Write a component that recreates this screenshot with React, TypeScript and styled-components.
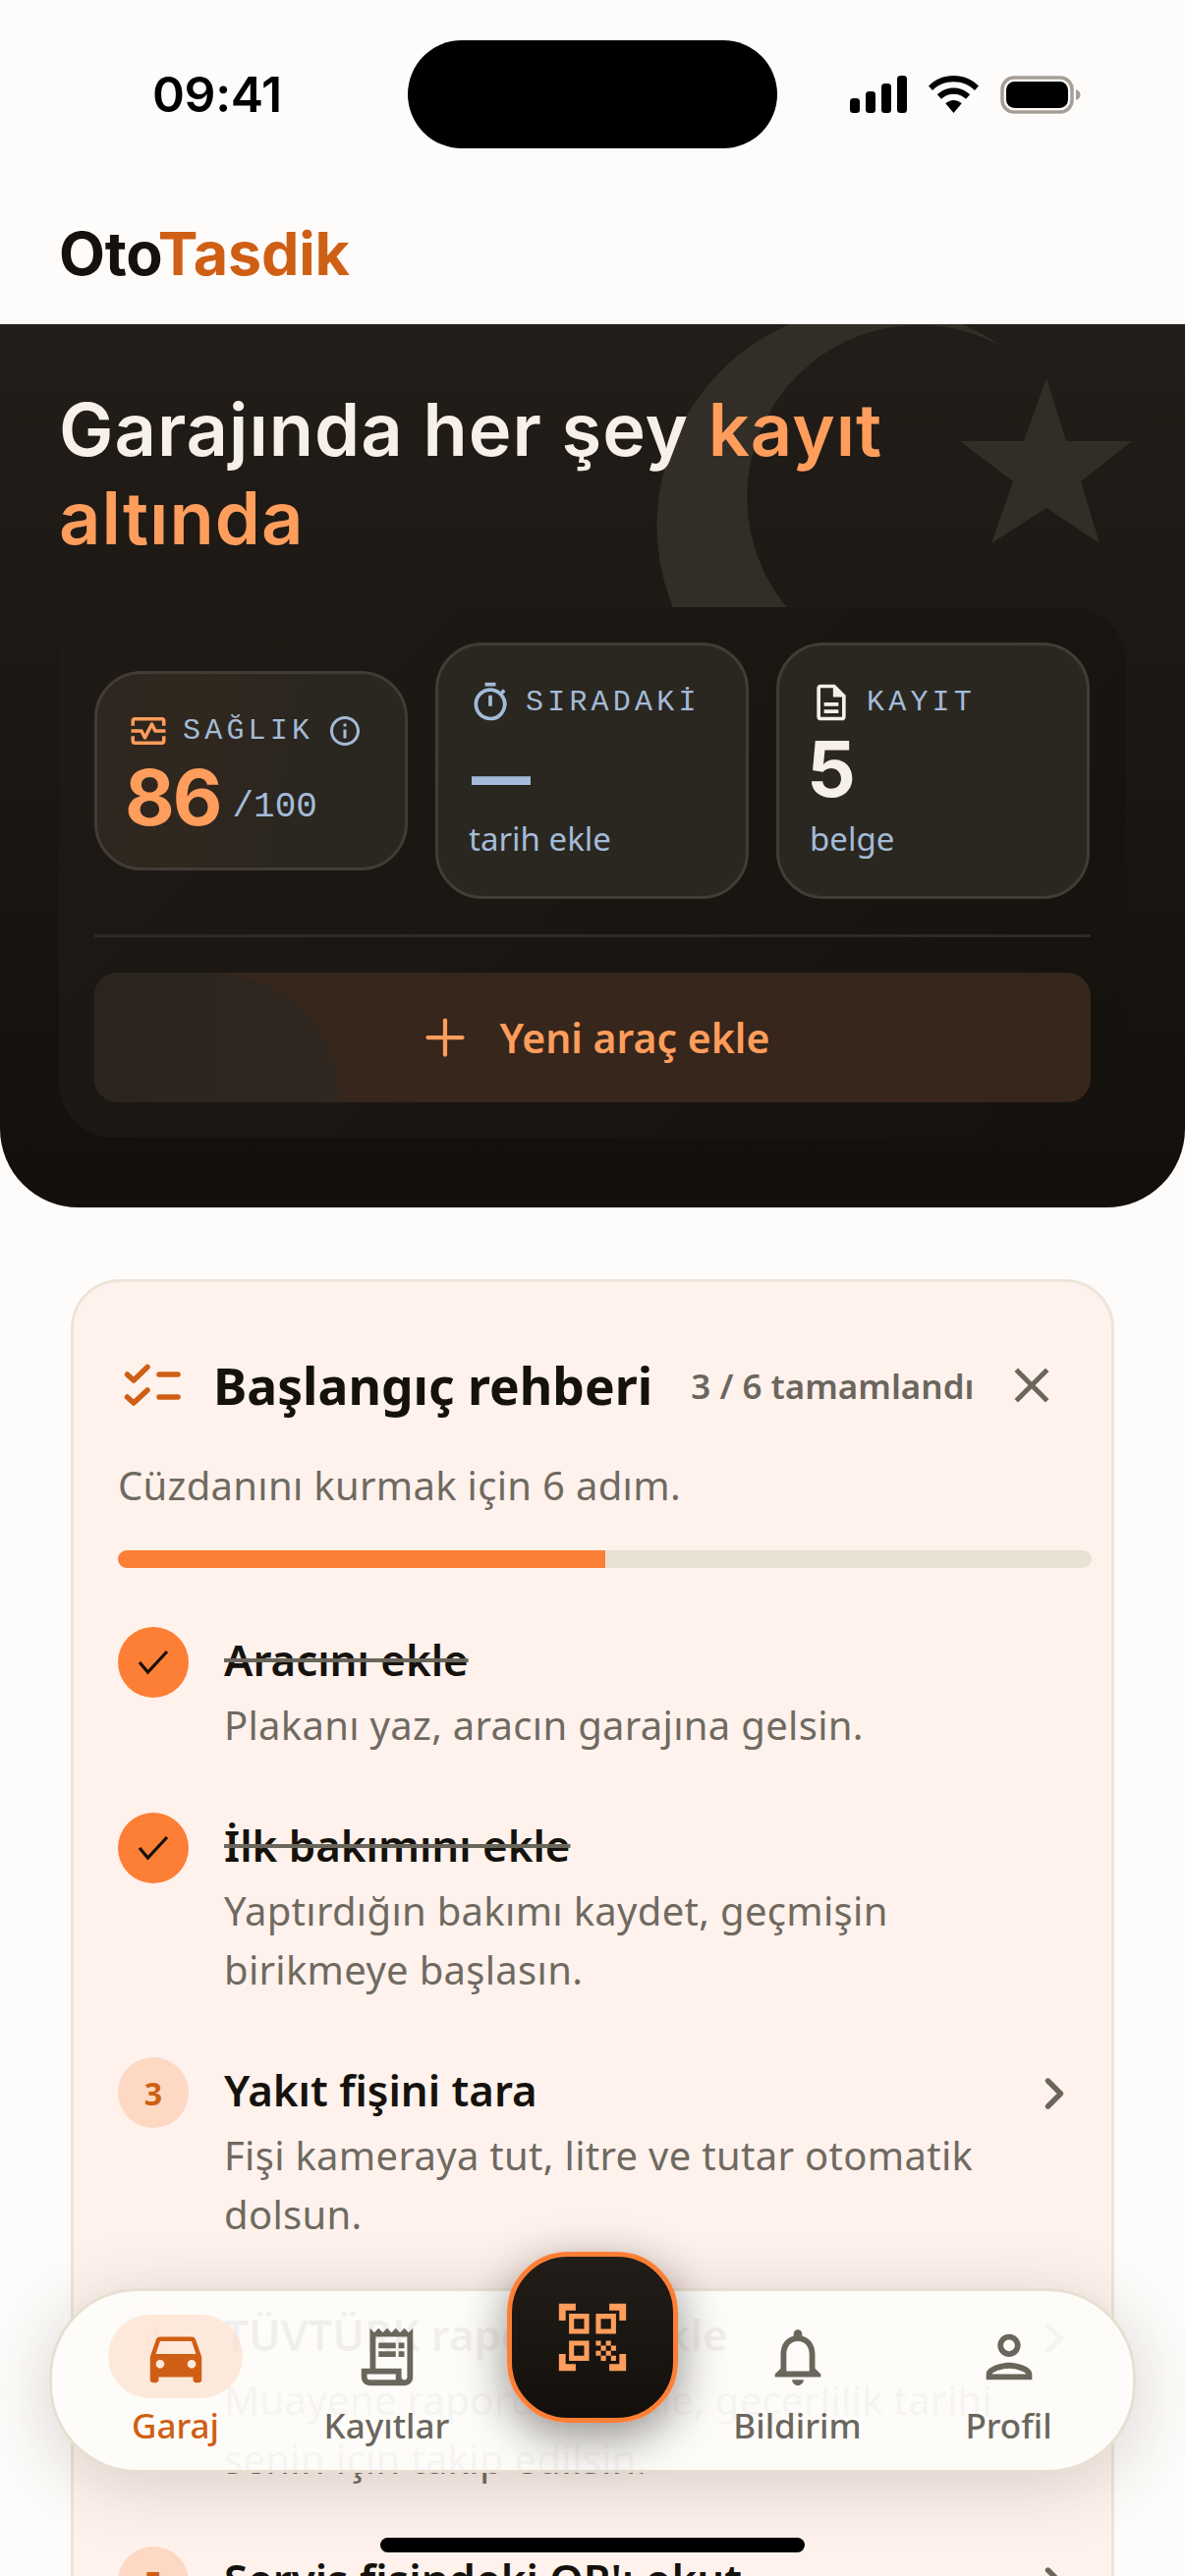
import React from "react";
import styled, { createGlobalStyle } from "styled-components";
import {
  MdDirectionsCar,
  MdOutlineReceiptLong,
  MdQrCodeScanner,
  MdOutlineNotifications,
  MdOutlinePerson,
  MdOutlineMonitorHeart,
  MdOutlineTimer,
  MdOutlineDescription,
  MdInfoOutline,
  MdClose,
} from "react-icons/md";
import { Plus, ChevronRight } from "lucide-react";

const Global = createGlobalStyle`
  html, body { margin: 0; padding: 0; background: #fdfcfa; }
  * { box-sizing: border-box; }
`;

const Screen = styled.div`
  position: relative;
  width: 1206px;
  height: 2622px;
  overflow: hidden;
  background: #fdfcfa;
  font-family: "Noto Sans", sans-serif;
  color: #15120d;
`;

const StatusBar = styled.div`
  display: flex;
  align-items: center;
  height: 110px;
  margin-top: 41px;
`;

const StatusSide = styled.div`
  width: 415px;
  padding-left: 155px;
`;

const Clock = styled.span`
  font-family: Inter, sans-serif;
  font-weight: 600;
  font-size: 50px;
  letter-spacing: -0.4px;
  color: #000;
`;

const Island = styled.div`
  width: 376px;
  height: 110px;
  border-radius: 55px;
  background: #000;
`;

const StatusIcons = styled.div`
  display: flex;
  align-items: center;
  gap: 22px;
  padding-left: 74px;
`;

const LogoBar = styled.div`
  height: 179px;
  padding: 72px 0 0 60px;
`;

const Logo = styled.div`
  font-family: Inter, sans-serif;
  font-weight: 700;
  font-size: 61px;
  line-height: 70px;
  letter-spacing: -0.2px;
`;

const LogoAccent = styled.span`
  color: #cf5f14;
`;

const Hero = styled.section`
  position: relative;
  overflow: hidden;
  height: 899px;
  padding: 62px 60px 0;
  border-radius: 0 0 80px 80px;
  background: linear-gradient(180deg, #221d18 0%, #13100b 100%);
`;

const HeroDecor = styled.svg`
  position: absolute;
  top: 0;
  left: 0;
`;

const HeroTitle = styled.h1`
  position: relative;
  margin: 0 0 46px;
  font-family: Inter, sans-serif;
  font-weight: 600;
  font-size: 74px;
  line-height: 90px;
  letter-spacing: 1px;
  color: #f6efea;
`;

const HeroAccent = styled.span`
  color: #ff9d5c;
`;

const Panel = styled.div`
  position: relative;
  padding: 36px;
  height: 540px;
  border-radius: 56px;
  background: linear-gradient(135deg, #1f1a15 0%, #1a1611 50%, #15120d 100%);
`;

const TileRow = styled.div`
  display: grid;
  grid-template-columns: repeat(3, 319px);
  gap: 28px;
  align-items: center;
`;

const Tile = styled.div<{ $glow?: boolean }>`
  padding: 34px 31px 29px;
  border: 3px solid #423c36;
  border-radius: 48px;
  background: ${(p) =>
    p.$glow
      ? "linear-gradient(100deg, #2e261f 0%, #30271e 35%, #2a2620 65%, #2a2620 100%)"
      : "#2a2720"};
`;

const TileHead = styled.div`
  display: flex;
  align-items: center;
  height: 48px;
  gap: 14px;
`;

const TileLabel = styled.span`
  font-family: "Liberation Mono", monospace;
  font-size: 30px;
  letter-spacing: 4.2px;
  color: #a3bbd8;
`;

const TileValue = styled.div`
  display: flex;
  align-items: flex-start;
  gap: 12px;
  height: 80px;
  margin-top: 6px;
`;

const BigNumber = styled.span<{ $color: string }>`
  margin: -2px 0 0 -3px;
  font-family: Inter, sans-serif;
  font-weight: 700;
  font-size: 78px;
  line-height: 80px;
  letter-spacing: -2px;
  color: ${(p) => p.$color};
`;

const Dash = styled.span`
  margin: 5px 0 0 3px;
  font-family: Inter, sans-serif;
  font-weight: 900;
  font-size: 60px;
  line-height: 80px;
  color: #a3bbd8;
`;

const OutOf = styled.span`
  margin-top: 8px;
  font-family: "Liberation Mono", monospace;
  font-size: 36px;
  line-height: 80px;
  color: #a3bbd8;
`;

const TileNote = styled.div`
  height: 48px;
  margin: 5px 0 5px;
  font-size: 33px;
  line-height: 48px;
  color: #a3bbd8;
`;

const Divider = styled.div`
  height: 3px;
  margin: 36px 0;
  background: #2e2a25;
`;

const AddButton = styled.div`
  position: relative;
  overflow: hidden;
  display: flex;
  align-items: center;
  justify-content: center;
  gap: 26px;
  height: 132px;
  border-radius: 24px;
  background: #36261b;
  color: #ff9d5c;
  font-weight: 600;
  font-size: 41px;
  &::before {
    content: "";
    position: absolute;
    left: 0;
    top: 0;
    width: 250px;
    height: 132px;
    border-top-right-radius: 130px 132px;
    background: linear-gradient(90deg, #2b241e 0%, #2f2720 100%);
  }
  & > * {
    position: relative;
  }
`;

const Guide = styled.section`
  margin: 73px 0 0 72px;
  width: 1062px;
  padding: 69px 20px 0 45px;
  border: 3px solid #ece5d8;
  border-radius: 50px;
  background: #fff2ed;
`;

const GuideHead = styled.div`
  display: flex;
  align-items: center;
  height: 72px;
`;

const GuideTitle = styled.h2`
  margin: 0 0 0 31px;
  font-weight: 700;
  font-size: 51.6px;
  line-height: 72px;
`;

const GuideCount = styled.span`
  margin-left: 39px;
  font-weight: 600;
  font-size: 35px;
  color: #6b665c;
`;

const CloseIcon = styled.span`
  display: flex;
  margin-left: auto;
  margin-right: 31px;
  color: #6b665c;
`;

const GuideLead = styled.p`
  margin: 36px 0 0;
  font-size: 40px;
  line-height: 60px;
  letter-spacing: 0.3px;
  color: #6f6a60;
`;

const Progress = styled.div`
  height: 18px;
  margin-top: 36px;
  border-radius: 9px;
  overflow: hidden;
  background: #e9e1d4;
`;

const ProgressFill = styled.div`
  height: 100%;
  background: #fd7e35;
`;

const Steps = styled.div`
  display: flex;
  flex-direction: column;
  gap: 59px;
  margin-top: 60px;
`;

const Step = styled.div`
  display: flex;
  align-items: flex-start;
  gap: 36px;
`;

const StepBadge = styled.div<{ $done: boolean }>`
  flex: none;
  display: flex;
  align-items: center;
  justify-content: center;
  width: 72px;
  height: 72px;
  border-radius: 50%;
  font-weight: 700;
  font-size: 32px;
  background: ${(p) => (p.$done ? "#fd7e35" : "#fdd8c3")};
  color: #cf5f14;
`;

const StepBody = styled.div`
  flex: 1;
`;

const StepTitle = styled.div<{ $done: boolean }>`
  font-weight: 600;
  font-size: 43.8px;
  line-height: 66px;
  text-decoration: ${(p) => (p.$done ? "line-through" : "none")};
  text-decoration-color: #6b665c;
  text-decoration-thickness: 4px;
`;

const StepText = styled.div`
  margin-top: 4px;
  font-size: 40px;
  line-height: 60px;
  letter-spacing: 0.3px;
  color: #6f6a60;
  white-space: pre-line;
`;

const StepArrow = styled.span`
  flex: none;
  display: flex;
  margin: 11px 12px 0 0;
  color: #6b665c;
`;

const Nav = styled.nav`
  position: absolute;
  left: 50px;
  bottom: 105px;
  display: grid;
  grid-template-columns: 215px 215px 203px 215px 215px;
  width: 1106px;
  height: 188px;
  padding: 0 18px;
  border: 3px solid #e6dfd2;
  border-radius: 90px;
  background: rgba(253, 252, 250, 0.95);
  box-shadow: 0 12px 70px rgba(70, 50, 40, 0.2);
`;

const NavItem = styled.div<{ $active?: boolean }>`
  display: flex;
  flex-direction: column;
  align-items: center;
  padding-top: 24px;
  font-weight: 500;
  font-size: 35px;
  line-height: 46px;
  color: ${(p) => (p.$active ? "#cf5f14" : "#6b665c")};
`;

const NavIconWrap = styled.div<{ $active?: boolean }>`
  display: flex;
  align-items: center;
  justify-content: center;
  width: 137px;
  height: 85px;
  margin-bottom: 5px;
  border-radius: 43px;
  background: ${(p) => (p.$active ? "rgba(253, 216, 195, 0.55)" : "transparent")};
`;

const ScanButton = styled.div`
  position: absolute;
  top: -40px;
  left: 463px;
  display: flex;
  align-items: center;
  justify-content: center;
  width: 174px;
  height: 174px;
  border: 5px solid #fd7e35;
  border-radius: 62px;
  background: linear-gradient(180deg, #221d18 0%, #13100b 100%);
  color: #ff9d5c;
  box-shadow: 0 14px 48px rgba(20, 12, 8, 0.46);
`;

const HomeBar = styled.div`
  position: absolute;
  left: 387px;
  bottom: 24px;
  width: 432px;
  height: 15px;
  border-radius: 8px;
  background: #000;
`;

type StepData = { title: string; text: string; done?: boolean };

const steps: StepData[] = [
  { title: "Aracını ekle", text: "Plakanı yaz, aracın garajına gelsin.", done: true },
  { title: "İlk bakımını ekle", text: "Yaptırdığın bakımı kaydet, geçmişin\nbirikmeye başlasın.", done: true },
  { title: "Yakıt fişini tara", text: "Fişi kameraya tut, litre ve tutar otomatik\ndolsun." },
  { title: "TÜVTÜRK raporunu ekle", text: "Muayene raporunu yükle, geçerlilik tarihi\nsenin için takip edilsin." },
  { title: "Servis fişindeki QR'ı okut", text: "Servis kaydın tek dokunuşla eklensin." },
];

const SignalIcon = () => (
  <svg width="58" height="38" viewBox="0 0 58 38" fill="#000">
    <rect x="0" y="23" width="10" height="15" rx="3.5" />
    <rect x="16" y="16" width="10" height="22" rx="3.5" />
    <rect x="32" y="8" width="10" height="30" rx="3.5" />
    <rect x="48" y="0" width="10" height="38" rx="3.5" />
  </svg>
);

const WifiIcon = () => (
  <svg width="51" height="38" viewBox="0 0 51 38" fill="#000">
    <path d="M25.5 0C35.5 0 44.5 4 51 10.5L47 15C41.5 9.5 34 6.2 25.5 6.2S9.5 9.5 4 15L0 10.5C6.5 4 15.5 0 25.5 0Z" />
    <path d="M25.5 12.5c6.5 0 12.3 2.6 16.6 6.8L38 23.8c-3.2-3.2-7.6-5.1-12.5-5.1s-9.3 1.9-12.5 5.1L8.9 19.3c4.3-4.2 10.1-6.8 16.6-6.8Z" />
    <path d="M25.5 25c3.2 0 6.1 1.3 8.2 3.3L25.5 38l-8.2-9.7c2.1-2 5-3.3 8.2-3.3Z" />
  </svg>
);

const BatteryIcon = () => (
  <svg width="82" height="39" viewBox="0 0 82 39">
    <rect x="2" y="2" width="71" height="35" rx="12" fill="none" stroke="#a59e97" strokeWidth="3.5" />
    <rect x="6" y="6" width="63" height="27" rx="8.5" fill="#000" />
    <path d="M77 14c3 1 4.5 3 4.5 5.5S80 24 77 25Z" fill="#a59e97" />
  </svg>
);

const ChecklistMark = styled.svg`
  flex: none;
  margin-left: 6px;
`;

const ChecklistIcon = () => (
  <ChecklistMark width="60" height="44" viewBox="0 0 60 44" fill="none" stroke="#cf5f14" strokeWidth="5.5" strokeLinecap="round" strokeLinejoin="round">
    <path d="M3.5 11l6.5 6L24 3.5" />
    <path d="M3.5 34l6.5 6L24 27" />
    <path d="M36 11h19" />
    <path d="M36 34h19" />
  </ChecklistMark>
);

const CheckMark = () => (
  <svg width="32" height="26" viewBox="0 0 32 26" fill="none" stroke="#15120d" strokeWidth="3.2">
    <path d="M2 13l8.5 10L30 2" />
  </svg>
);

export default function App() {
  return (
    <Screen>
      <Global />
      <StatusBar>
        <StatusSide>
          <Clock>09:41</Clock>
        </StatusSide>
        <Island />
        <StatusIcons>
          <SignalIcon />
          <WifiIcon />
          <BatteryIcon />
        </StatusIcons>
      </StatusBar>

      <LogoBar>
        <Logo>
          Oto<LogoAccent>Tasdik</LogoAccent>
        </Logo>
      </LogoBar>

      <Hero>
        <HeroDecor width="1206" height="899" viewBox="0 0 1206 899">
          <path d="M1019 22A223 223 0 0 0 706.9 330L852 330A175 175 0 0 1 1019 22Z" fill="#332d28" />
          <polygon
            points="1065,55 1085,119 1152,119 1100,160 1119,223 1065,187 1009,223 1031,160 977,119 1042,119"
            fill="#332d28"
          />
        </HeroDecor>
        <HeroTitle>
          Garajında her şey <HeroAccent>kayıt altında</HeroAccent>
        </HeroTitle>
        <Panel>
          <TileRow>
            <Tile $glow>
              <TileHead>
                <MdOutlineMonitorHeart size={42} color="#ff9d5c" />
                <TileLabel>SAĞLIK</TileLabel>
                <MdInfoOutline size={36} color="#a3bbd8" />
              </TileHead>
              <TileValue>
                <BigNumber $color="#ff9d5c">86</BigNumber>
                <OutOf>/100</OutOf>
              </TileValue>
            </Tile>
            <Tile>
              <TileHead>
                <MdOutlineTimer size={44} color="#a3bbd8" />
                <TileLabel>SIRADAKİ</TileLabel>
              </TileHead>
              <TileValue>
                <Dash>—</Dash>
              </TileValue>
              <TileNote>tarih ekle</TileNote>
            </Tile>
            <Tile>
              <TileHead>
                <MdOutlineDescription size={44} color="#f6efea" />
                <TileLabel>KAYIT</TileLabel>
              </TileHead>
              <TileValue>
                <BigNumber $color="#f6efea">5</BigNumber>
              </TileValue>
              <TileNote>belge</TileNote>
            </Tile>
          </TileRow>
          <Divider />
          <AddButton>
            <Plus size={60} strokeWidth={1.7} />
            <span>Yeni araç ekle</span>
          </AddButton>
        </Panel>
      </Hero>

      <Guide>
        <GuideHead>
          <ChecklistIcon />
          <GuideTitle>Başlangıç rehberi</GuideTitle>
          <GuideCount>3 / 6 tamamlandı</GuideCount>
          <CloseIcon>
            <MdClose size={60} />
          </CloseIcon>
        </GuideHead>
        <GuideLead>Cüzdanını kurmak için 6 adım.</GuideLead>
        <Progress>
          <ProgressFill style={{ width: `${(3 / 6) * 100}%` }} />
        </Progress>
        <Steps>
          {steps.map((step, i) => (
            <Step key={step.title}>
              <StepBadge $done={!!step.done}>{step.done ? <CheckMark /> : i + 1}</StepBadge>
              <StepBody>
                <StepTitle $done={!!step.done}>{step.title}</StepTitle>
                <StepText>{step.text}</StepText>
              </StepBody>
              {!step.done && (
                <StepArrow>
                  <ChevronRight size={52} strokeWidth={2.5} />
                </StepArrow>
              )}
            </Step>
          ))}
        </Steps>
      </Guide>

      <Nav>
        <NavItem $active>
          <NavIconWrap $active>
            <MdDirectionsCar size={70} />
          </NavIconWrap>
          Garaj
        </NavItem>
        <NavItem>
          <NavIconWrap>
            <MdOutlineReceiptLong size={70} />
          </NavIconWrap>
          Kayıtlar
        </NavItem>
        <span />
        <NavItem>
          <NavIconWrap>
            <MdOutlineNotifications size={70} />
          </NavIconWrap>
          Bildirim
        </NavItem>
        <NavItem>
          <NavIconWrap>
            <MdOutlinePerson size={70} />
          </NavIconWrap>
          Profil
        </NavItem>
        <ScanButton>
          <MdQrCodeScanner size={82} />
        </ScanButton>
      </Nav>
      <HomeBar />
    </Screen>
  );
}
